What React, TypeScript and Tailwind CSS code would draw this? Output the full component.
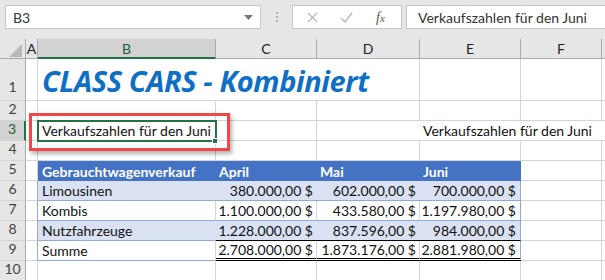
import React from "react";

const F = "font-['Lato','Liberation_Sans',sans-serif]";

function C({ className = "", children }: { className?: string; children?: React.ReactNode }) {
  return <div className={"box-border min-w-0 " + className}>{children}</div>;
}

const g = "border-r border-b border-[#d4d4d4]";
const rh = "border-r border-b border-r-[#ababab] border-b-[#d4d4d4] bg-[#e6e6e6] flex items-end justify-center pb-[1px] text-[14px] text-[#444]";
const ch = "border-r border-b border-[#ababab] bg-[#e6e6e6] flex items-center justify-center text-[14px] text-[#222]";

export default function App() {
  return (
    <div className={"relative w-[605px] h-[280px] overflow-hidden bg-white " + F}>
      {/* formula bar */}
      <div className="h-[39px] bg-[#e6e6e6] flex items-start pt-[5px]">
        <div className="ml-[5px] w-[256px] h-[24px] bg-white border border-[#c6c6c6] flex items-center justify-between pl-[7px] pr-[7px] text-[14px] text-[#333]">
          <span>B3</span>
          <svg width="9" height="5" viewBox="0 0 9 5"><path d="M0 0h9L4.5 5z" fill="#777" /></svg>
        </div>
        <div className="w-[31px] h-[24px] flex flex-col items-center justify-center gap-[2px]">
          <div className="w-[2px] h-[2px] bg-[#b0b0b0]" />
          <div className="w-[2px] h-[2px] bg-[#b0b0b0]" />
          <div className="w-[2px] h-[2px] bg-[#b0b0b0]" />
        </div>
        <div className="w-[110px] h-[24px] bg-white border border-[#c6c6c6] flex items-center pl-[14px]">
          <svg width="11" height="11" viewBox="0 0 11 11"><path d="M1 1l9 9M10 1l-9 9" stroke="#b5b5b5" strokeWidth="1.2" /></svg>
          <svg className="ml-[22px]" width="13" height="11" viewBox="0 0 13 11"><path d="M1 6l4 4 7-9" stroke="#b5b5b5" strokeWidth="1.4" fill="none" /></svg>
          <span className="ml-[23px] font-['Liberation_Serif',serif] italic text-[14px] text-[#555]">f<span className="text-[11px]">x</span></span>
        </div>
        <div className="ml-[4px] flex-1 h-[24px] bg-white border border-r-0 border-[#c6c6c6] flex items-center pl-[11px] text-[14px] text-[#333] whitespace-nowrap">
          Verkaufszahlen für den Juni
        </div>
      </div>

      {/* sheet grid */}
      <div className="grid grid-cols-[26px_12px_178px_101px_103px_101px_81px_3px] grid-rows-[20px_42px_20px_20px_20px_20px_20px_20px_20px_20px_20px] text-[14px] text-[#111]">
        {/* header row */}
        <C className="border-r border-b border-[#ababab] bg-[#e6e6e6] relative">
          <svg className="absolute left-[9px] top-[5px]" width="13" height="13" viewBox="0 0 13 13"><path d="M13 0V13H0z" fill="#b8b8b8" /></svg>
        </C>
        <C className={ch}>A</C>
        <C className="border-r border-b-2 border-r-[#ababab] border-b-[#217346] bg-[#d2d2d2] flex items-center justify-center text-[14px] text-[#1e5c3a]">B</C>
        <C className={ch}>C</C>
        <C className={ch}>D</C>
        <C className={ch}>E</C>
        <C className={ch}>F</C>
        <C className="border-b border-[#ababab] bg-[#e6e6e6]" />

        {/* row 1 */}
        <C className={rh + " pb-[3px]"}>1</C>
        <C className={g} />
        <C className="border-b border-[#d4d4d4] flex items-center pl-[4px] pt-[3px] whitespace-nowrap overflow-visible">
          <span className="font-['Open_Sans',sans-serif] font-bold italic text-[29px] tracking-[-0.4px] text-[#0e6fc4]">CLASS CARS - Kombiniert</span>
        </C>
        <C className="border-b border-[#d4d4d4]" />
        <C className={g} />
        <C className={g} />
        <C className={g} />
        <C className="border-b border-[#d4d4d4]" />

        {/* row 2 */}
        <C className={rh}>2</C>
        <C className={g} />
        <C className={g} />
        <C className={g} />
        <C className={g} />
        <C className={g} />
        <C className={g} />
        <C className="border-b border-[#d4d4d4]" />

        {/* row 3 */}
        <C className="border-r-2 border-b border-r-[#217346] border-b-[#d4d4d4] bg-[#d2d2d2] flex items-end justify-center pb-[1px] text-[14px] text-[#1e5c3a]">3</C>
        <C className={g} />
        <C className={g + " flex items-center pl-[4px] whitespace-nowrap"}>Verkaufszahlen für den Juni</C>
        <C className={g} />
        <C className="border-b border-[#d4d4d4]" />
        <C className="border-b border-[#d4d4d4] flex items-center pl-[3px] whitespace-nowrap overflow-visible">Verkaufszahlen für den Juni</C>
        <C className="border-b border-[#d4d4d4]" />
        <C className="border-b border-[#d4d4d4]" />

        {/* row 4 */}
        <C className={rh}>4</C>
        <C className={g} />
        <C className={g} />
        <C className={g} />
        <C className={g} />
        <C className={g} />
        <C className={g} />
        <C className="border-b border-[#d4d4d4]" />

        {/* row 5 header */}
        <C className={rh}>5</C>
        <C className={g} />
        <C className="bg-[#4472c4] text-white font-bold flex items-center pl-[4px] whitespace-nowrap">Gebrauchtwagenverkauf</C>
        <C className="bg-[#4472c4] text-white font-bold flex items-center pl-[3px]">April</C>
        <C className="bg-[#4472c4] text-white font-bold flex items-center pl-[3px]">Mai</C>
        <C className="bg-[#4472c4] text-white font-bold flex items-center pl-[3px]">Juni</C>
        <C className={g} />
        <C className="border-b border-[#d4d4d4]" />

        {/* row 6 */}
        <C className={rh}>6</C>
        <C className="border-r border-b border-r-[#8ea9db] border-b-[#d4d4d4]" />
        <C className="bg-[#d9e1f2] border-b border-[#8ea9db] flex items-center pl-[4px]">Limousinen</C>
        <C className="bg-[#d9e1f2] border-b border-[#8ea9db] flex items-center justify-end pr-[4px]">380.000,00 $</C>
        <C className="bg-[#d9e1f2] border-b border-[#8ea9db] flex items-center justify-end pr-[4px]">602.000,00 $</C>
        <C className="bg-[#d9e1f2] border-b border-r border-[#8ea9db] flex items-center justify-end pr-[4px]">700.000,00 $</C>
        <C className={g} />
        <C className="border-b border-[#d4d4d4]" />

        {/* row 7 */}
        <C className={rh}>7</C>
        <C className="border-r border-b border-r-[#8ea9db] border-b-[#d4d4d4]" />
        <C className="border-r border-b border-r-[#d4d4d4] border-b-[#8ea9db] flex items-center pl-[4px]">Kombis</C>
        <C className="border-r border-b border-r-[#d4d4d4] border-b-[#8ea9db] flex items-center justify-end pr-[3px]">1.100.000,00 $</C>
        <C className="border-r border-b border-r-[#d4d4d4] border-b-[#8ea9db] flex items-center justify-end pr-[3px]">433.580,00 $</C>
        <C className="border-r border-b border-[#8ea9db] flex items-center justify-end pr-[4px]">1.197.980,00 $</C>
        <C className={g} />
        <C className="border-b border-[#d4d4d4]" />

        {/* row 8 */}
        <C className={rh}>8</C>
        <C className="border-r border-b border-r-[#8ea9db] border-b-[#d4d4d4]" />
        <C className="bg-[#d9e1f2] border-b border-[#8ea9db] flex items-center pl-[4px]">Nutzfahrzeuge</C>
        <C className="bg-[#d9e1f2] border-b border-black flex items-center justify-end pr-[4px]">1.228.000,00 $</C>
        <C className="bg-[#d9e1f2] border-b border-black flex items-center justify-end pr-[4px]">837.596,00 $</C>
        <C className="bg-[#d9e1f2] border-b border-r border-b-black border-r-[#8ea9db] flex items-center justify-end pr-[4px]">984.000,00 $</C>
        <C className={g} />
        <C className="border-b border-[#d4d4d4]" />

        {/* row 9 */}
        <C className={rh}>9</C>
        <C className="border-r border-b border-r-[#8ea9db] border-b-[#d4d4d4]" />
        <C className="border-r border-b border-r-[#d4d4d4] border-b-[#8ea9db] flex items-center pl-[4px]">Summe</C>
        <C className="border-r border-r-[#d4d4d4] border-b-[3px] border-b-black border-double flex items-center justify-end pr-[3px]">2.708.000,00 $</C>
        <C className="border-r border-r-[#d4d4d4] border-b-[3px] border-b-black border-double flex items-center justify-end pr-[3px]">1.873.176,00 $</C>
        <C className="border-r border-r-[#8ea9db] border-b-[3px] border-b-black border-double flex items-center justify-end pr-[4px]">2.881.980,00 $</C>
        <C className={g} />
        <C className="border-b border-[#d4d4d4]" />

        {/* row 10 */}
        <C className={rh}>10</C>
        <C className={g} />
        <C className={g} />
        <C className={g} />
        <C className={g} />
        <C className={g} />
        <C className={g} />
        <C className="border-b border-[#d4d4d4]" />
      </div>

      {/* selection */}
      <div className="absolute left-[37px] top-[120px] w-[180px] h-[22px] border-2 border-[#217346]" />
      <div className="absolute left-[212px] top-[138px] w-[6px] h-[6px] bg-[#217346] border border-white" />
      {/* red annotation */}
      <div className="absolute left-[29px] top-[113px] w-[201px] h-[38px] border-[3px] border-[#f04848] shadow-[2px_3px_4px_rgba(0,0,0,0.3)]" />
    </div>
  );
}
